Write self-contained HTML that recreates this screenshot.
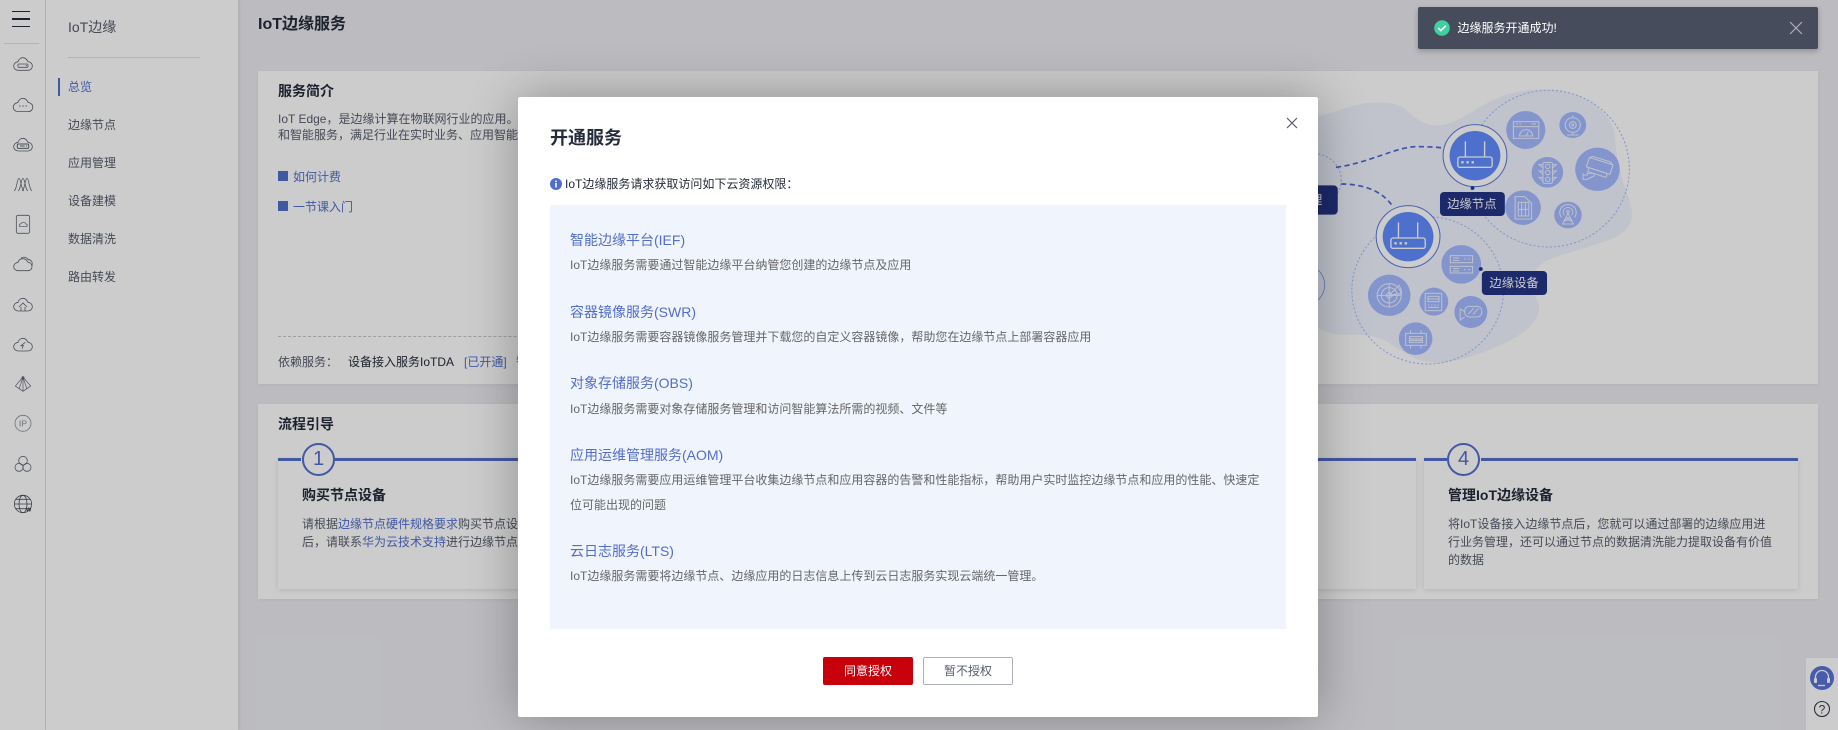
<!DOCTYPE html>
<html lang="zh">
<head>
<meta charset="utf-8">
<title>IoT边缘</title>
<style>
html,body{margin:0;padding:0;width:1838px;height:730px;overflow:hidden;background:#ebecf0;font-family:"Liberation Sans","Noto Sans CJK SC",sans-serif;font-size:12px;color:#575d6c}
.abs,.t{position:absolute}
.t{white-space:nowrap;line-height:20px;height:20px}
a{color:#526ecc;text-decoration:none}
b{font-weight:700;color:#252b3a}
.panel{position:absolute;background:#fff;box-shadow:0 1px 4px rgba(0,0,0,.06)}
.card{position:absolute;background:#fff;top:459px;height:130px;box-shadow:0 1px 5px rgba(0,0,0,.12)}
.line{position:absolute;top:458px;height:3px;background:#526ecc}
.num{position:absolute;top:443px;width:29px;height:29px;border:2px solid #526ecc;border-radius:50%;background:#fff;color:#526ecc;font-size:20px;line-height:29px;text-align:center}
.h{color:#526ecc;font-size:14px}
.d{color:#666}
</style>
</head>
<body>

<!-- left rail -->
<div class="abs" style="left:0;top:0;width:45px;height:730px;background:#fff;border-right:1px solid #dfe1e6"></div>
<div class="abs" style="left:12px;top:10.5px;width:18px;height:1.5px;background:#252b3a"></div>
<div class="abs" style="left:12px;top:18px;width:18px;height:1.5px;background:#252b3a"></div>
<div class="abs" style="left:12px;top:25.5px;width:18px;height:1.5px;background:#252b3a"></div>
<div class="abs" style="left:4px;top:43px;width:35px;height:1px;background:#dfe1e6"></div>

<svg class="abs" style="left:0;top:0" width="46" height="730" viewBox="0 0 138 2190" fill="none" stroke="#5e6470" stroke-width="2.4">
<defs><path id="cl" d="M-14,18H14C23,18 28,12 28,5C28,-3 21,-8 15,-8C11,-16 5,-20 0,-20C-7,-20 -13,-15 -15,-8C-22,-7 -28,-2 -28,5C-28,12 -22,18 -14,18Z"/></defs>
<g transform="translate(69,193)"><use href="#cl"/><rect x="-15" y="-1" width="30" height="10" rx="2"/><path d="M8,4h4"/></g>
<g transform="translate(69,316) scale(1.05)"><use href="#cl"/><path d="M-11,2h4M-2,2h4M7,2h4" stroke-width="3"/></g>
<g transform="translate(69,435)"><use href="#cl"/><rect x="-17" y="-3" width="34" height="13" rx="3" stroke-width="3"/><path d="M-9,3h14M9,3h3" stroke-width="3"/></g>
<path d="M42,572C50,572 51,535 57,535C63,535 64,572 72,572M54,572C62,572 63,535 69,535C75,535 76,572 84,572M66,572C74,572 75,535 81,535C87,535 88,572 96,572" stroke-width="2.2"/>
<g><rect x="49" y="646" width="40" height="54" rx="5"/><path d="M60,680h18c5,0 5,-8 0,-8c-2,-6 -13,-6 -15,-1c-5,0 -7,9 -3,9z" stroke-width="2"/></g>
<g transform="translate(69,795)"><path d="M-14,17H14C23,17 27,11 27,5C27,-3 21,-8 15,-8C11,-16 5,-19 0,-19C-7,-19 -13,-15 -15,-8C-22,-7 -28,-2 -28,5C-28,11 -22,17 -14,17Z"/><path d="M-6,-20C0,-26 10,-24 15,-17C24,-16 30,-8 27,1"/></g>
<g transform="translate(69,915)"><use href="#cl"/><path d="M-12,6L0,-6L12,6M-6,6V18M6,6V18"/></g>
<g transform="translate(69,1035)"><use href="#cl"/><path d="M7,-8L-6,2L1,2L-3,11"/></g>
<path d="M69,1131L46,1158L69,1174L92,1158ZM69,1131V1174M69,1131L58,1165M69,1131L80,1165" stroke-width="2"/><circle cx="69" cy="1133" r="3" fill="#5e6470"/>
<circle cx="69" cy="1270" r="24" stroke="#8a8f9a"/><text x="69" y="1279" font-size="26" text-anchor="middle" fill="#8a8f9a" stroke="none" font-family="Liberation Sans">IP</text>
<g><circle cx="69" cy="1382" r="13"/><circle cx="57" cy="1402" r="12"/><circle cx="81" cy="1402" r="12"/></g>
<g stroke="#4a4f5a"><circle cx="69" cy="1512" r="26"/><ellipse cx="69" cy="1512" rx="12" ry="26"/><path d="M43,1512H95M47,1498H91M47,1526H91"/></g>
<text x="86" y="1534" font-size="17" font-weight="700" fill="#3c404a" stroke="none" text-anchor="middle" font-family="Liberation Sans">W</text>
</svg>

<!-- second nav -->
<div class="abs" style="left:46px;top:0;width:192px;height:730px;background:#fff;box-shadow:1px 0 3px rgba(0,0,0,.1)"></div>
<div class="t" style="left:68px;top:17px;font-size:14px">IoT边缘</div>
<div class="abs" style="left:68px;top:57px;width:132px;height:1px;background:#dfe1e6"></div>
<div class="abs" style="left:58px;top:78px;width:2px;height:18px;background:#526ecc"></div>
<div class="t" style="left:68px;top:76.5px;color:#526ecc">总览</div>
<div class="t" style="left:68px;top:114.5px">边缘节点</div>
<div class="t" style="left:68px;top:152.5px">应用管理</div>
<div class="t" style="left:68px;top:190.5px">设备建模</div>
<div class="t" style="left:68px;top:228.5px">数据清洗</div>
<div class="t" style="left:68px;top:266.5px">路由转发</div>

<!-- main -->
<div class="t" style="left:258px;top:15px;font-size:16px"><b>IoT边缘服务</b></div>

<div class="panel" style="left:258px;top:71px;width:1560px;height:313px"></div>
<div class="t" style="left:278px;top:81px;font-size:14px"><b>服务简介</b></div>
<div class="t" style="left:278px;top:108.5px">IoT Edge，是边缘计算在物联网行业的应用。</div>
<div class="t" style="left:278px;top:124.5px">和智能服务，满足行业在实时业务、应用智能</div>
<div class="abs" style="left:278px;top:171px;width:10px;height:10px;background:#526ecc"></div>
<div class="t" style="left:293px;top:166.5px"><a>如何计费</a></div>
<div class="abs" style="left:278px;top:201px;width:10px;height:10px;background:#526ecc"></div>
<div class="t" style="left:293px;top:196.5px"><a>一节课入门</a></div>
<div class="abs" style="left:278px;top:336px;width:1000px;border-top:1px dashed #c4c6cc"></div>
<div class="t" style="left:278px;top:351.5px">依赖服务：</div>
<div class="t" style="left:348px;top:351.5px;color:#252b3a">设备接入服务IoTDA</div>
<div class="t" style="left:464px;top:351.5px"><a>[已开通]</a></div>
<div class="t" style="left:516px;top:351.5px;color:#9a6a2c">智能边缘平台</div>

<!-- illustration -->
<svg class="abs" style="left:1300px;top:0" width="538" height="400" viewBox="0 0 1568 1200" preserveAspectRatio="none" fill="none">
<path fill="#f0f4ff" d="M0,370L52,350Q100,335 135,323Q170,312 205,308Q240,305 270,311Q300,318 315,334Q330,350 350,362Q370,375 395,376Q420,378 450,364Q480,350 510,330Q540,310 580,292Q620,275 670,270Q720,265 760,272Q800,280 835,300Q870,320 892,347Q915,375 917,407Q920,440 927,485Q935,530 950,570Q965,610 967,635Q970,660 955,682Q940,705 900,720Q860,735 810,750Q760,765 730,777Q700,790 687,810Q675,830 677,855Q680,880 691,902Q703,925 691,950Q680,975 650,997Q620,1020 575,1040Q530,1060 480,1075Q430,1090 390,1087Q350,1085 320,1067Q290,1050 265,1032Q240,1015 210,1009Q180,1003 140,1004Q100,1005 76,995Q52,985 0,960Z"/>
<g stroke="#a4bbff" stroke-width="3" stroke-dasharray="6 6">
<circle cx="725" cy="506" r="235"/>
<circle cx="372" cy="871" r="221"/>
<circle cx="41" cy="540" r="79"/>
</g>
<circle cx="10" cy="855" r="62" stroke="#7a9cf5" stroke-width="2.5"/>
<g stroke="#4e69d2" stroke-width="5" stroke-dasharray="15 10">
<path d="M105,502C200,490 290,435 350,440C400,440 430,445 455,452"/>
<path d="M120,552C180,552 240,570 272,622"/>
</g>
<g fill="#a4bbff">
<circle cx="658" cy="390" r="57"/><circle cx="795" cy="375" r="39"/><circle cx="867" cy="508" r="65"/>
<circle cx="721" cy="517" r="46"/><circle cx="650" cy="623" r="52"/><circle cx="781" cy="645" r="40"/>
<circle cx="470" cy="793" r="58"/><circle cx="260" cy="886" r="62"/><circle cx="390" cy="905" r="42"/>
<circle cx="498" cy="936" r="48"/><circle cx="337" cy="1016" r="49"/>
</g>
<!-- routers -->
<g>
<circle cx="510" cy="467" r="93" fill="#fff" stroke="#5c7be0" stroke-width="3"/>
<circle cx="510" cy="467" r="74" fill="#618dff"/>
<rect x="460" y="471" width="100" height="31" rx="6" stroke="#fff" stroke-width="4"/>
<path d="M482,470V424M538,470V424" stroke="#fff" stroke-width="4"/>
<path d="M470,487h7M485,487h7M500,487h7" stroke="#fff" stroke-width="7"/>
</g>
<g transform="translate(-195,243)">
<circle cx="510" cy="467" r="93" fill="#fff" stroke="#5c7be0" stroke-width="3"/>
<circle cx="510" cy="467" r="74" fill="#618dff"/>
<rect x="460" y="471" width="100" height="31" rx="6" stroke="#fff" stroke-width="4"/>
<path d="M482,470V424M538,470V424" stroke="#fff" stroke-width="4"/>
<path d="M470,487h7M485,487h7M500,487h7" stroke="#fff" stroke-width="7"/>
</g>
<!-- small icons -->
<g stroke="#eef2ff" stroke-width="3">
<rect x="622" y="365" width="74" height="50"/><path d="M622,380H696M674,372h14M630,372h5M640,372h5"/><path d="M640,408a19,19 0 0 1 38,0ZM659,408l6,-12"/>
<circle cx="795" cy="375" r="22"/><circle cx="795" cy="375" r="10"/><circle cx="795" cy="375" r="3"/><path d="M778,405H812M795,397V405M795,353V346"/>
<g transform="rotate(18 870 505)"><rect x="835" y="482" width="72" height="30" rx="2"/><path d="M843,512h56v12h-56zM905,482l-8,-6h-54l-8,6"/></g><path d="M825,520v18h12l20,-10v-8h-20v5h-12"/>
<rect x="708" y="487" width="28" height="63" rx="5"/><circle cx="722" cy="499" r="6.5"/><circle cx="722" cy="518" r="6.5"/><circle cx="722" cy="538" r="6.5"/><path d="M708,494h-11l11,10M708,513h-11l11,10M708,532h-11l11,10M736,494h11l-11,10M736,513h11l-11,10M736,532h11l-11,10"/>
<path d="M627,590H655L675,610V657H627Z"/><rect x="636" y="607" width="31" height="41"/><path d="M636,628H667M646,607V648M657,607V648"/>
<path d="M781,640L765,672H797ZM770,660H792M775,650L790,664M787,650L772,664"/><path d="M770,645a14,14 0 1 1 22,0M762,652a24,24 0 1 1 38,0"/><circle cx="781" cy="635" r="4"/>
<rect x="438" y="767" width="65" height="21"/><rect x="438" y="799" width="65" height="20"/><path d="M446,774h18M446,781h18M446,806h18M446,813h18M478,777h5M490,777h5M478,809h5M490,809h5"/>
<circle cx="260" cy="886" r="35"/><circle cx="260" cy="886" r="23"/><path d="M224,886H296M260,850V922M260,886L288,856A42,42 0 0 1 296,880ZM250,886l10,-10l10,10l-10,10z"/>
<rect x="365" y="880" width="48" height="52"/><rect x="373" y="889" width="32" height="16"/><path d="M373,897H405M373,915h4M382,915h4M391,915h4M400,915h4M373,922h32"/>
<rect x="480" y="919" width="50" height="32" rx="14"/><path d="M490,943l16,-18M504,943l16,-18M480,935l-13,-8V960l13,-9"/>
<rect x="308" y="1000" width="60" height="36"/><rect x="319" y="1010" width="38" height="7"/><rect x="319" y="1021" width="38" height="6"/><path d="M322,1000v-9M353,1000v-9M322,1036v9M353,1036v9"/>
</g>
<!-- labels -->
<rect x="-60" y="556" width="170" height="88" rx="12" fill="#233486"/>
<text x="65" y="612" font-size="36" fill="#fff" text-anchor="end" font-family="Liberation Sans,Noto Sans CJK SC,sans-serif">管理</text>
<rect x="408" y="576" width="189" height="72" rx="12" fill="#233486"/>
<text x="501" y="624" font-size="36" fill="#fff" text-anchor="middle" font-family="Liberation Sans,Noto Sans CJK SC,sans-serif">边缘节点</text>
<rect x="530" y="813" width="190" height="72" rx="12" fill="#233486"/>
<text x="624" y="861" font-size="36" fill="#fff" text-anchor="middle" font-family="Liberation Sans,Noto Sans CJK SC,sans-serif">边缘设备</text>
<circle cx="503" cy="564" r="5.5" fill="#233486"/>
<circle cx="527" cy="807" r="5.5" fill="#233486"/>
</svg>

<!-- flow panel -->
<div class="panel" style="left:258px;top:404px;width:1560px;height:195px"></div>
<div class="t" style="left:278px;top:414px;font-size:14px"><b>流程引导</b></div>

<div class="card" style="left:278px;width:364px"></div>
<div class="line" style="left:278px;width:23px"></div>
<div class="line" style="left:335px;width:307px"></div>
<div class="num" style="left:302px">1</div>
<div class="t" style="left:302px;top:485px;font-size:14px"><b>购买节点设备</b></div>
<div class="t" style="left:302px;top:513.7px">请根据<a>边缘节点硬件规格要求</a>购买节点设备，</div>
<div class="t" style="left:302px;top:531.7px">后，请联系<a>华为云技术支持</a>进行边缘节点</div>

<div class="card" style="left:1049px;width:367px"></div>
<div class="line" style="left:1049px;width:367px"></div>

<div class="card" style="left:1424px;width:374px"></div>
<div class="line" style="left:1424px;width:23px"></div>
<div class="line" style="left:1481px;width:317px"></div>
<div class="num" style="left:1447px">4</div>
<div class="t" style="left:1448px;top:485px;font-size:14px"><b>管理IoT边缘设备</b></div>
<div class="t" style="left:1448px;top:513.7px">将IoT设备接入边缘节点后，您就可以通过部署的边缘应用进</div>
<div class="t" style="left:1448px;top:531.7px">行业务管理，还可以通过节点的数据清洗能力提取设备有价值</div>
<div class="t" style="left:1448px;top:549.7px">的数据</div>

<!-- right float widget -->
<div class="abs" style="left:1806px;top:658px;width:32px;height:72px;background:#fff"></div>
<svg class="abs" style="left:1806px;top:658px" width="32" height="72" viewBox="0 0 32 72" fill="none">
<circle cx="16" cy="20" r="12" fill="#5a74d8"/>
<path d="M9.5,22v-3a6.5,6.5 0 0 1 13,0v3" stroke="#fff" stroke-width="1.3"/>
<rect x="8" y="20" width="3" height="5" rx="1" fill="#fff"/><rect x="21" y="20" width="3" height="5" rx="1" fill="#fff"/>
<path d="M12,27.5h7" stroke="#fff" stroke-width="1.3"/>
<circle cx="16" cy="51" r="7.5" stroke="#3a3f4c" stroke-width="1.1"/>
<text x="16" y="55.5" font-size="12" text-anchor="middle" fill="#3a3f4c" font-family="Liberation Sans">?</text>
</svg>

<!-- overlay -->
<div class="abs" style="left:0;top:0;width:1838px;height:730px;background:rgba(0,0,0,.2)"></div>

<!-- toast -->
<div class="abs" style="left:1418px;top:7px;width:400px;height:42px;background:#474c5c;border-radius:2px;box-shadow:0 2px 6px rgba(0,0,0,.25)"></div>
<svg class="abs" style="left:1434px;top:20px" width="16" height="16" viewBox="0 0 16 16" fill="none"><circle cx="8" cy="8" r="7.8" fill="#3fd0a0"/><path d="M4.2,8l2.7,2.6L11.8,5.8" stroke="#fff" stroke-width="1.6"/></svg>
<div class="t" style="left:1457.5px;top:17.5px;color:#fff">边缘服务开通成功!</div>
<svg class="abs" style="left:1789px;top:21px" width="14" height="14" viewBox="0 0 14 14" fill="none"><path d="M1,1L13,13M13,1L1,13" stroke="#adb0b8" stroke-width="1.2"/></svg>

<!-- modal -->
<div class="abs" style="left:518px;top:97px;width:800px;height:620px;background:#fff;border-radius:2px;box-shadow:0 0 50px rgba(0,0,0,.3)"></div>
<svg class="abs" style="left:1286px;top:117px" width="12" height="12" viewBox="0 0 12 12" fill="none"><path d="M1,1L11,11M11,1L1,11" stroke="#575d6c" stroke-width="1.2"/></svg>
<div class="t" style="left:550px;top:127.7px;font-size:18px"><b>开通服务</b></div>
<svg class="abs" style="left:549.7px;top:178.3px" width="12" height="12" viewBox="0 0 12 12"><circle cx="6" cy="6" r="6" fill="#526ecc"/><rect x="5.2" y="5" width="1.6" height="4.4" fill="#fff"/><rect x="5.2" y="2.6" width="1.6" height="1.5" fill="#fff"/></svg>
<div class="t" style="left:565px;top:174px;color:#252b3a">IoT边缘服务请求获取访问如下云资源权限：</div>
<div class="abs" style="left:550px;top:205px;width:736px;height:424px;background:#f0f4fc"></div>

<div class="t h" style="left:570px;top:230px">智能边缘平台(IEF)</div>
<div class="t d" style="left:570px;top:255px">IoT边缘服务需要通过智能边缘平台纳管您创建的边缘节点及应用</div>
<div class="t h" style="left:570px;top:301.7px">容器镜像服务(SWR)</div>
<div class="t d" style="left:570px;top:326.7px">IoT边缘服务需要容器镜像服务管理并下载您的自定义容器镜像，帮助您在边缘节点上部署容器应用</div>
<div class="t h" style="left:570px;top:373px">对象存储服务(OBS)</div>
<div class="t d" style="left:570px;top:399px">IoT边缘服务需要对象存储服务管理和访问智能算法所需的视频、文件等</div>
<div class="t h" style="left:570px;top:445px">应用运维管理服务(AOM)</div>
<div class="t d" style="left:570px;top:470px">IoT边缘服务需要应用运维管理平台收集边缘节点和应用容器的告警和性能指标，帮助用户实时监控边缘节点和应用的性能、快速定</div>
<div class="t d" style="left:570px;top:494.7px">位可能出现的问题</div>
<div class="t h" style="left:570px;top:541px">云日志服务(LTS)</div>
<div class="t d" style="left:570px;top:566px">IoT边缘服务需要将边缘节点、边缘应用的日志信息上传到云日志服务实现云端统一管理。</div>

<div class="abs" style="left:823px;top:657px;width:90px;height:28px;background:#c7000b;border-radius:2px;color:#fff;line-height:28px;text-align:center">同意授权</div>
<div class="abs" style="left:923px;top:657px;width:88px;height:26px;border:1px solid #adb0b8;border-radius:2px;background:#fff;color:#575d6c;line-height:26px;text-align:center">暂不授权</div>

</body>
</html>
